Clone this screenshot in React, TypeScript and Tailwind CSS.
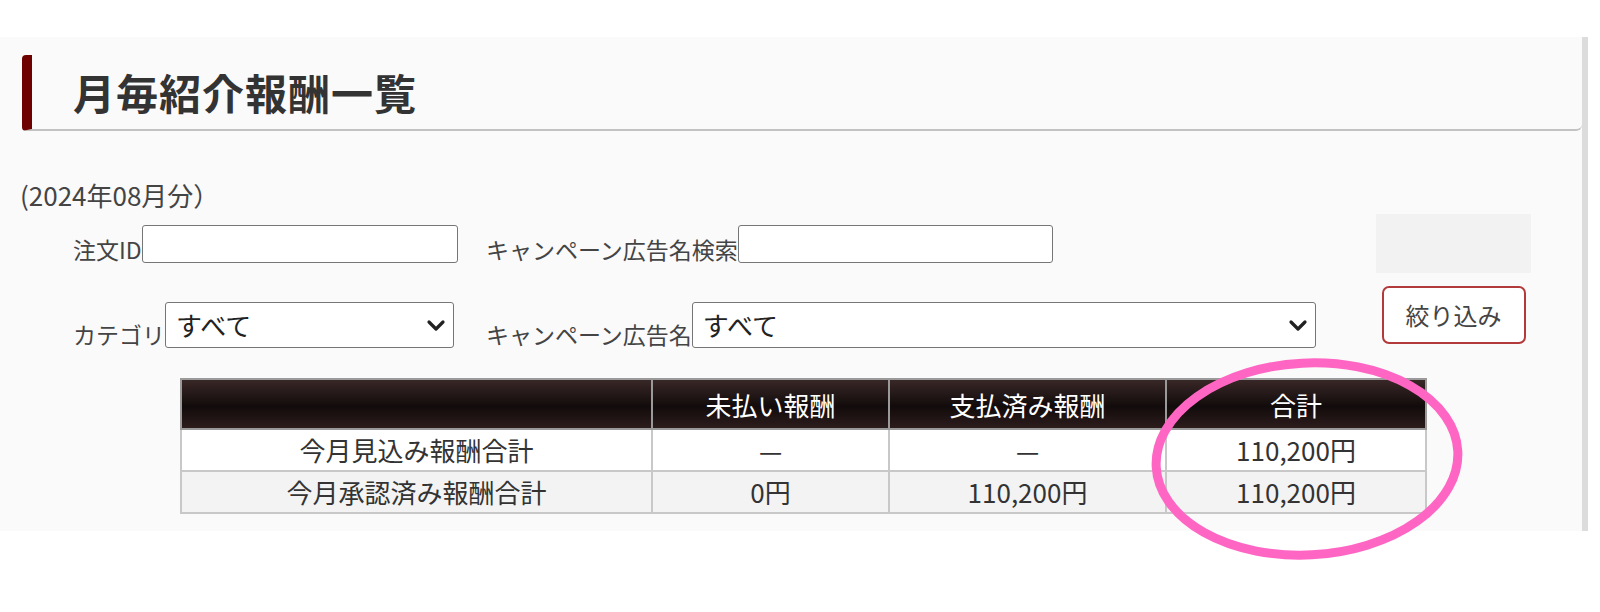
import React from 'react';

const font = { fontFamily: '"Noto Sans CJK JP", "Noto Sans", sans-serif' };

function Chevron() {
  return (
    <svg
      className="pointer-events-none absolute right-[8px] top-1/2 -translate-y-1/2"
      width="20"
      height="14"
      viewBox="0 0 20 14"
    >
      <path d="M3 4 L10 11 L17 4" fill="none" stroke="#222" strokeWidth="3.2" strokeLinecap="round" strokeLinejoin="round" />
    </svg>
  );
}

function SelectBox({ width }: { width: string }) {
  return (
    <div className={`relative h-[46px] ${width}`}>
      <select className="h-full w-full appearance-none rounded-[3px] border border-[#767676] bg-white pl-[10px] text-[26px] leading-none text-[#222]">
        <option>すべて</option>
      </select>
      <Chevron />
    </div>
  );
}

export default function App() {
  const rows = [
    { label: '今月見込み報酬合計', unpaid: '—', paid: '—', total: '110,200円', bg: 'bg-white' },
    { label: '今月承認済み報酬合計', unpaid: '0円', paid: '110,200円', total: '110,200円', bg: 'bg-[#f3f3f3]' },
  ];

  return (
    <div className="relative h-[612px] w-[1600px] overflow-hidden bg-white text-[#333]" style={font}>
      <div className="mt-[37px] flex">
        {/* Panel */}
        <div className="h-[494px] w-[1582px] bg-[#fafafa] pt-[18px]">
          {/* Heading */}
          <div className="ml-[22px] flex h-[76px] items-center rounded-l-[4px] rounded-br-[6px] border-b-2 border-l-[10px] border-b-[#c2c2c2] border-l-[#6e0000] pl-[41px]">
            <h1 className="text-[42px] font-bold leading-none tracking-[1px] text-[#333]">月毎紹介報酬一覧</h1>
          </div>

          {/* Month */}
          <div className="mt-[44px] pl-[20px] text-[26px] leading-[39px] text-[#444]">(2024年08月分）</div>

          {/* Filter form */}
          <div className="flex items-start">
            <div className="pl-[73px] pt-[11px]">
              <div className="flex items-end">
                <div className="flex w-[413px] items-end">
                  <span className="pb-[2px] text-[23px] leading-none text-[#444]">注文ID</span>
                  <input className="h-[38px] w-[316px] rounded-[3px] border border-[#767676] bg-white" />
                </div>
                <span className="pb-[2px] text-[23px] leading-none text-[#444]">キャンペーン広告名検索</span>
                <input className="h-[38px] w-[315px] rounded-[3px] border border-[#767676] bg-white" />
              </div>
              <div className="mt-[39px] flex items-end">
                <div className="flex w-[413px] items-end">
                  <span className="pb-[2px] text-[23px] leading-none text-[#444]">カテゴリ</span>
                  <SelectBox width="w-[289px]" />
                </div>
                <span className="pb-[2px] text-[23px] leading-none text-[#444]">キャンペーン広告名</span>
                <SelectBox width="w-[624px]" />
              </div>
            </div>
            <div className="ml-auto mr-[51px] flex w-[155px] flex-col items-center">
              <div className="h-[59px] w-full bg-[#f2f2f2]" />
              <button className="mt-[13px] h-[58px] w-[144px] rounded-[7px] border-2 border-[#b23a3a] bg-white text-[24px] text-[#444]">
                絞り込み
              </button>
            </div>
          </div>

          {/* Summary table */}
          <table className="ml-[180px] mt-[30px] w-[1245px] table-fixed border-collapse border-2 border-[#b4b4b4] text-center text-[26px]">
            <colgroup>
              <col className="w-[471px]" />
              <col className="w-[237px]" />
              <col className="w-[277px]" />
              <col className="w-[260px]" />
            </colgroup>
            <thead>
              <tr className="bg-[linear-gradient(to_bottom,#3a2828,#120b0b_55%,#2e1d1d)] text-white">
                <th className="h-[50px] border-2 border-[#9a9a9a] font-normal"></th>
                <th className="h-[50px] border-2 border-[#9a9a9a] font-normal">未払い報酬</th>
                <th className="h-[50px] border-2 border-[#9a9a9a] font-normal">支払済み報酬</th>
                <th className="h-[50px] border-2 border-[#9a9a9a] font-normal">合計</th>
              </tr>
            </thead>
            <tbody>
              {rows.map((r) => (
                <tr key={r.label} className={r.bg}>
                  <td className="h-[42px] border-2 border-[#c8c8c8] leading-none">{r.label}</td>
                  <td className="h-[42px] border-2 border-[#c8c8c8] leading-none">{r.unpaid}</td>
                  <td className="h-[42px] border-2 border-[#c8c8c8] leading-none">{r.paid}</td>
                  <td className="h-[42px] border-2 border-[#c8c8c8] leading-none">{r.total}</td>
                </tr>
              ))}
            </tbody>
          </table>
        </div>
        <div className="h-[494px] w-[6px] bg-[#dcdcdc]" />
      </div>

      {/* Highlight circle */}
      <svg className="pointer-events-none absolute left-[1150px] top-[357px]" width="314" height="204" viewBox="0 0 314 204">
        <ellipse cx="157" cy="102" rx="151" ry="96" fill="none" stroke="#ff66c4" strokeWidth="9" transform="rotate(-3 157 102)" />
      </svg>
    </div>
  );
}
